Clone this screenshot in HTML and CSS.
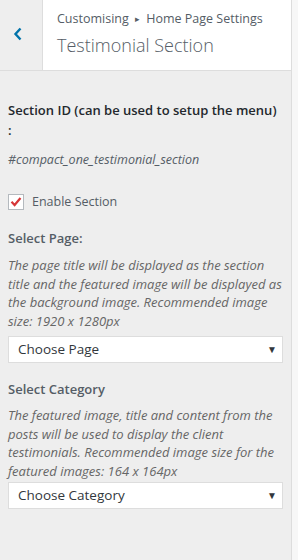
FILE: index.html
```html
<!DOCTYPE html>
<html lang="en">
<head>
  <meta charset="UTF-8">
  <meta name="viewport" content="width=device-width, initial-scale=1.0">
  <title>Testimonial Section</title>
  <link rel="stylesheet" href="styles.css">
</head>
<body>
  <div class="panel">
    <div class="panel-header">
      <button class="back-btn" aria-label="Back">
        <svg width="10" height="14" viewBox="0 0 10 14"><path d="M7.5 1.5 L2.5 7 L7.5 12.5" fill="none" stroke="#0073aa" stroke-width="2.4"/></svg>
      </button>
      <div class="panel-title">
        <span class="crumbs">Customising <span class="crumb-arrow">&#9656;</span> Home Page Settings</span>
        <h2>Testimonial Section</h2>
      </div>
    </div>

    <div class="controls">
      <div class="control">
        <span class="control-label">Section ID (can be used to setup the menu) :</span>
        <p class="section-id">#compact_one_testimonial_section</p>
      </div>

      <div class="control">
        <label class="check">
          <span class="check-box">
            <svg width="14" height="14" viewBox="0 0 14 14"><path d="M2.5 6.8 L5.6 10 L11.5 3" fill="none" stroke="#d63638" stroke-width="2.2"/></svg>
          </span>
          Enable Section
        </label>
      </div>

      <div class="control page-control">
        <span class="control-label">Select Page:</span>
        <span class="description">The page title will be displayed as the section title and the featured image will be displayed as the background image. Recommended image size: 1920 x 1280px</span>
        <div class="select">Choose Page<span class="caret">&#9660;</span></div>
      </div>

      <div class="control cat-control">
        <span class="control-label">Select Category</span>
        <span class="description">The featured image, title and content from the posts will be used to display the client testimonials. Recommended image size for the featured images: 164 x 164px</span>
        <div class="select">Choose Category<span class="caret">&#9660;</span></div>
      </div>
    </div>
  </div>
</body>
</html>
```

FILE: styles.css
```css
html, body {
  height: 100%;
}
body {
  margin: 0;
  background: #f7f7f7;
  font-family: 'Open Sans', 'Noto Sans', sans-serif;
  color: #555d66;
}
.panel {
  width: 292px;
  min-height: 100%;
  background: #eeeeee;
  border-right: 1px solid #dddddd;
  box-sizing: border-box;
}
.panel-header {
  display: flex;
  height: 71px;
  background: #fff;
  border-bottom: 1px solid #dddddd;
  box-sizing: border-box;
}
.back-btn {
  width: 43px;
  flex: none;
  border: 0;
  border-right: 1px solid #dddddd;
  background: #eeeeee;
  padding: 0 0 2px 13px;
  display: flex;
  align-items: center;
}
.panel-title {
  padding: 9px 0 0 14px;
}
.crumbs {
  display: block;
  font-size: 12.5px;
  line-height: 20px;
  color: #555d66;
}
.crumb-arrow {
  font-size: 9px;
  margin: 0 3px;
  position: relative;
  top: -1px;
}
.panel-title h2 {
  margin: 0;
  font-size: 18px;
  font-weight: 300;
  line-height: 30px;
  color: #555d66;
}
.controls {
  padding: 29px 8px 0 8px;
}
.control {
  margin-bottom: 16px;
}
.control-label {
  display: block;
  font-size: 13px;
  font-weight: 600;
  line-height: 20px;
  color: #23282d;
}
.section-id {
  margin: 11px 0 0;
  font-style: italic;
  font-size: 12.5px;
  color: #555d66;
}
.check {
  display: flex;
  align-items: center;
  font-size: 12.5px;
  margin-top: 25px;
}
.check-box {
  width: 14px;
  height: 14px;
  border: 1px solid #b4b9be;
  background: #fff;
  margin-right: 8px;
  display: flex;
}
.page-control .control-label {
  margin-top: 18px;
  color: #555d66;
}
.cat-control .control-label {
  margin-top: 8px;
  color: #555d66;
}
.description {
  display: block;
  margin-top: 8px;
  font-style: italic;
  font-size: 13px;
  line-height: 18.5px;
  color: #666;
}
.cat-control .description {
  margin-top: 7px;
}
.select {
  position: relative;
  margin-top: 6px;
  width: 275px;
  height: 27px;
  box-sizing: border-box;
  background: #fff;
  border: 1px solid #dddddd;
  padding-left: 9px;
  font-size: 13.5px;
  line-height: 25px;
  color: #32373c;
}
.cat-control .select {
  margin-top: 2px;
}
.caret {
  position: absolute;
  right: 5px;
  top: 0;
  font-size: 10px;
  color: #32373c;
}
```
